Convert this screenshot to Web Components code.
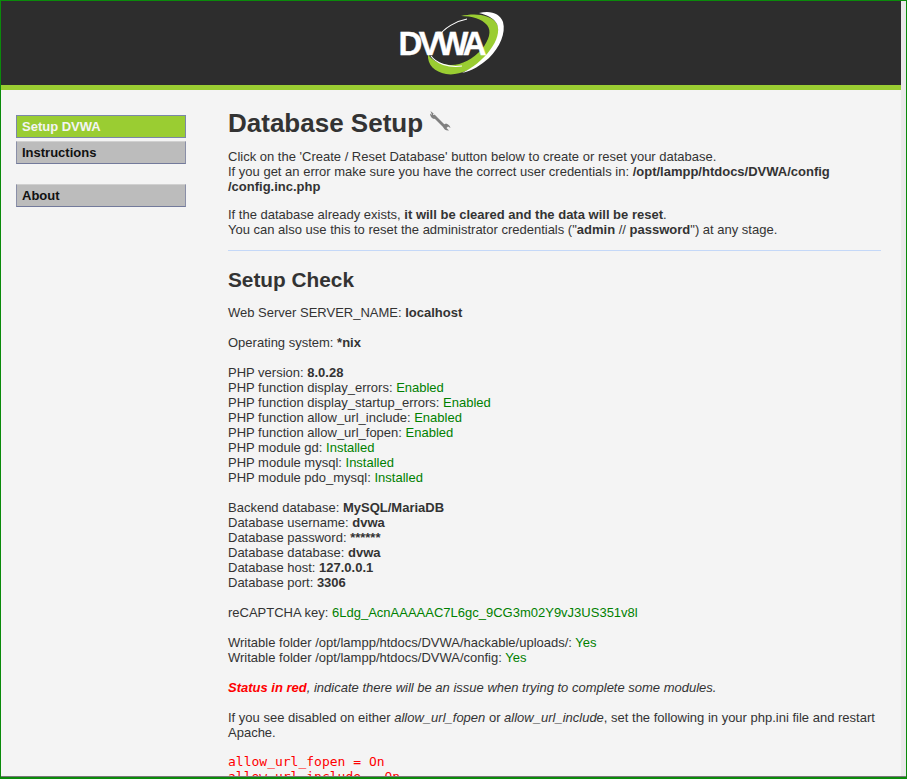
<!DOCTYPE html>
<html>
<head>
<meta charset="utf-8">
<title>Setup :: Damn Vulnerable Web Application</title>
<style>
  html, body { margin: 0; height: 100%; overflow: hidden; }
  body { background: #f4f4f4; color: #333; font: 13px/15px "Liberation Sans", Arial, sans-serif; }
</style>
</head>
<body>
<dvwa-frame>
  <dvwa-header></dvwa-header>
  <dvwa-layout>
    <dvwa-menu slot="menu">
      <dvwa-item selected>Setup DVWA</dvwa-item>
      <dvwa-item>Instructions</dvwa-item>
      <dvwa-gap></dvwa-gap>
      <dvwa-item>About</dvwa-item>
    </dvwa-menu>
    <page-title>Database Setup</page-title>
    <text-para>
      Click on the 'Create / Reset Database' button below to create or reset your database.<br>
      If you get an error make sure you have the correct user credentials in: <b>/opt/lampp/htdocs/DVWA/config<br>/config.inc.php</b>
    </text-para>
    <text-para>
      If the database already exists, <b>it will be cleared and the data will be reset</b>.<br>
      You can also use this to reset the administrator credentials ("<b>admin</b> // <b>password</b>") at any stage.
    </text-para>
    <page-rule></page-rule>
    <section-title>Setup Check</section-title>
    <text-para>
      Web Server SERVER_NAME: <b>localhost</b><br><br>
      Operating system: <b>*nix</b><br><br>
      PHP version: <b>8.0.28</b><br>
      PHP function display_errors: <status-ok>Enabled</status-ok><br>
      PHP function display_startup_errors: <status-ok>Enabled</status-ok><br>
      PHP function allow_url_include: <status-ok>Enabled</status-ok><br>
      PHP function allow_url_fopen: <status-ok>Enabled</status-ok><br>
      PHP module gd: <status-ok>Installed</status-ok><br>
      PHP module mysql: <status-ok>Installed</status-ok><br>
      PHP module pdo_mysql: <status-ok>Installed</status-ok><br><br>
      Backend database: <b>MySQL/MariaDB</b><br>
      Database username: <b>dvwa</b><br>
      Database password: <b>******</b><br>
      Database database: <b>dvwa</b><br>
      Database host: <b>127.0.0.1</b><br>
      Database port: <b>3306</b><br><br>
      reCAPTCHA key: <status-ok>6Ldg_AcnAAAAAC7L6gc_9CG3m02Y9vJ3US351v8l</status-ok><br><br>
      Writable folder /opt/lampp/htdocs/DVWA/hackable/uploads/: <status-ok>Yes</status-ok><br>
      Writable folder /opt/lampp/htdocs/DVWA/config: <status-ok>Yes</status-ok><br><br>
      <i><status-bad><b>Status in red</b></status-bad>, indicate there will be an issue when trying to complete some modules.</i><br><br>
      If you see disabled on either <i>allow_url_fopen</i> or <i>allow_url_include</i>, set the following in your php.ini file and restart Apache.
    </text-para>
    <code-block>allow_url_fopen = On
allow_url_include = On</code-block>
  </dvwa-layout>
</dvwa-frame>

<script>
// small helper, every element is just a shadow root with its own style + markup
function define(name, html) {
  customElements.define(name, class extends HTMLElement {
    constructor() {
      super()
      // whitespace between tags would show up in inline hosts and in the pre block
      this.attachShadow({mode: 'open'}).innerHTML = html.trim().replace(/>\s+</g, '><')
    }
  })
}

define('dvwa-frame', `
  <style>
    :host {
      display: block;
      box-sizing: border-box;
      height: 779px;
      overflow: hidden;
      border: solid #0a8a0a;
      border-width: 1px 1px 2px 1px;
    }
    .outer {
      box-sizing: border-box;
      height: 100%;
      overflow: hidden;
      background: #e9e9e9;
      padding-right: 5px;
      border-bottom: 1px solid #777;
      display: flex;
      flex-direction: column;
    }
  </style>
  <div class="outer"><slot></slot></div>
`)

define('dvwa-header', `
  <style>
    :host {
      display: flex;
      justify-content: center;
      flex: none;
      box-sizing: border-box;
      height: 89px;
      padding-top: 7px;
      background: #2d2d2d;
      border-bottom: 5px solid #9acd32;
    }
    svg { display: block; width: 112px; height: 68px; }
    text { font: bold 33px "Liberation Sans", Arial, sans-serif; fill: #fff; letter-spacing: -3.6px; stroke: #fff; stroke-width: .4px; }
  </style>
  <svg viewBox="395 8 112 68" aria-label="DVWA logo">
    <path fill="#9acd32" d="M461 16C474 13 491 14 497 24C502 34 495 48 484 59C472 70 458 76 446 74C435 72 427 65 428 54C431 60 440 65 451 65C462 65 473 59 482 49C489 40 492 31 487 25C482 19 472 16 461 16Z"/>
    <path fill="#fff" d="M479 13C490 10 500 13 503 22C506 33 500 47 489 58C481 65 472 71 462 73C472 68 483 60 490 50C497 41 500 31 497 24C494 18 487 15 479 13Z"/>
    <path fill="none" stroke="#fff" stroke-width="1.1" d="M467 19C456 21 444 28 438 37"/>
    <path fill="none" stroke="#fff" stroke-width="1.1" d="M431 56C436 63 448 68 462 66"/>
    <text x="398.5" y="55">DVWA</text>
  </svg>
`)

define('dvwa-layout', `
  <style>
    :host {
      display: grid;
      grid-template-columns: 170px 1fr;
      column-gap: 42px;
      flex: 1;
      min-height: 0;
      box-sizing: border-box;
      padding: 25px 20px 0 15px;
      background: #f4f4f4;
      overflow: hidden;
    }
  </style>
  <slot name="menu"></slot>
  <div><slot></slot></div>
`)

define('dvwa-menu', `
  <style>
    :host { display: flex; flex-direction: column; gap: 3px; }
  </style>
  <slot></slot>
`)

define('dvwa-gap', `
  <style>:host { display: block; height: 14px; }</style>
`)

define('dvwa-item', `
  <style>
    :host {
      display: block;
      box-sizing: border-box;
      height: 23px;
      padding: 0 5px;
      background: #bcbcbc;
      border: 1px solid;
      border-color: #d0d0d0 #8a8fa8 #737a9b #8a8fa8;
      color: #111;
      font-weight: bold;
      line-height: 21px;
    }
    :host([selected]) {
      background: #9acd32;
      border-color: #7b87a8;
      color: #f4f4f4;
    }
  </style>
  <slot></slot>
`)

define('page-title', `
  <style>
    :host {
      display: flex;
      align-items: center;
      gap: 6px;
      height: 32px;
      margin: -8px 0 10px;
      font-size: 26px;
      line-height: 32px;
      font-weight: bold;
    }
    svg { width: 22px; height: 22px; display: block; margin-top: -4px; }
  </style>
  <slot></slot>
  <svg viewBox="0 0 22 22" fill="#808080">
    <path d="M4.5 5.5 16 17" stroke="#808080" stroke-width="2.8" fill="none"/>
    <path d="M1.5 1 4.6 3.4 4 5 5.5 5 8 7.5 5 9C2.5 8.5 1 6 1 3.5L3 5Z"/>
    <path d="M14 15 17 13.5C19.5 14 21 16 21.5 18L19 16.5 17.5 18 20 20.5C17.5 21 15 19.5 14.5 17.5Z"/>
  </svg>
`)

define('text-para', `
  <style>:host { display: block; margin-bottom: 13px; }</style>
  <slot></slot>
`)

define('page-rule', `
  <style>:host { display: block; height: 1px; margin: 6px 0 17px; background: #c4d8f8; }</style>
`)

define('section-title', `
  <style>
    :host { display: block; margin-bottom: 13px; font-size: 20.8px; line-height: 24px; font-weight: bold; }
  </style>
  <slot></slot>
`)

define('status-ok', `
  <style>:host { color: #008000; }</style>
  <slot></slot>
`)

define('status-bad', `
  <style>:host { color: #f00; }</style>
  <slot></slot>
`)

define('code-block', `
  <style>
    :host {
      display: block;
      margin-top: 14px;
      white-space: pre;
      color: #f00;
      font: 13px/15px "DejaVu Sans Mono", monospace;
    }
  </style>
  <slot></slot>
`)
</script>
</body>
</html>
